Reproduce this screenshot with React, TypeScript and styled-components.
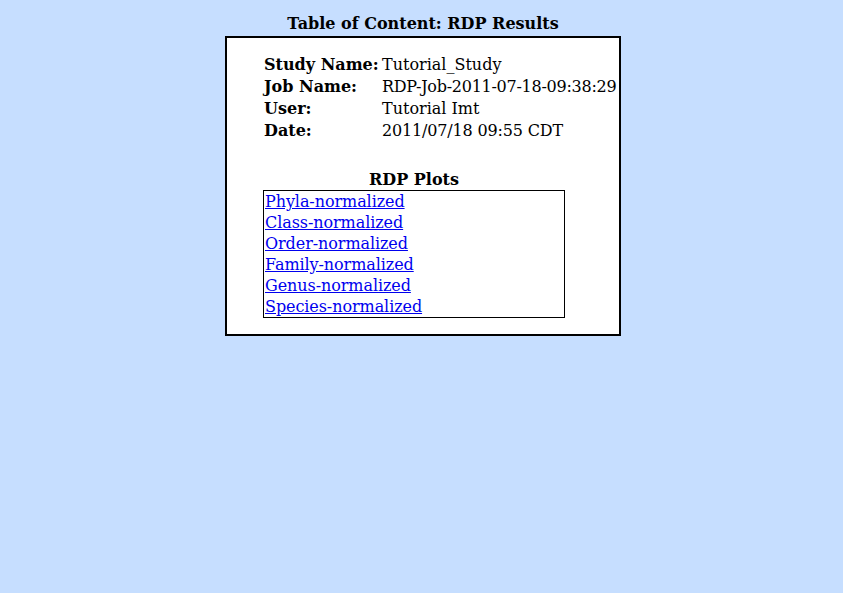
import styled, { createGlobalStyle } from "styled-components";

const GlobalStyle = createGlobalStyle`
  html, body {
    margin: 0;
    background-color: #c6deff;
  }
  body {
    font-family: "DejaVu Serif", "Liberation Serif", serif;
    font-size: 16px;
    color: #000;
  }
`

const Page = styled.div`
  display: flex;
  flex-direction: column;
  align-items: center;
  padding: 14px 0 0 3px;
`
const Title = styled.h1`
  margin: 0 0 3px;
  font-size: 16px;
  font-weight: bold;
  line-height: 19px;
`
const Box = styled.section`
  width: 353px;
  border: 2px solid #000;
  background-color: #fff;
  padding: 15px 2px 16px 37px;
`
const InfoGrid = styled.div`
  display: grid;
  grid-template-columns: 117px auto;
  grid-auto-rows: 22px;
  align-items: center;
  white-space: nowrap;
`
const Label = styled.span`
  font-weight: bold;
`
const Value = styled.span<{ $spacing: number }>`
  padding-left: 1px;
  letter-spacing: ${p => p.$spacing}px;
`
const Plots = styled.div`
  width: 302px;
  margin: 28px 0 0 -1px;
`
const PlotsTitle = styled.h2`
  margin: 0;
  font-size: 16px;
  font-weight: bold;
  line-height: 21px;
  text-align: center;
`
const LinkList = styled.ul`
  list-style: none;
  margin: 0;
  padding: 0 1px;
  border: 1px solid #000;
`
const LinkItem = styled.li`
  height: 21px;
  line-height: 21px;
  & > a {
    color: #0000ee;
    text-decoration: underline;
    letter-spacing: -0.08px;
  }
`

const info: [string, string, number][] = [
  ["Study Name:", "Tutorial_Study", 0],
  ["Job Name:", "RDP-Job-2011-07-18-09:38:29", -0.26],
  ["User:", "Tutorial Imt", 0],
  ["Date:", "2011/07/18 09:55 CDT", -0.16],
];

const plots = [
  "Phyla-normalized",
  "Class-normalized",
  "Order-normalized",
  "Family-normalized",
  "Genus-normalized",
  "Species-normalized",
];

function App() {
  return (
    <>
      <GlobalStyle />
      <Page>
        <Title>Table of Content: RDP Results</Title>
        <Box>
          <InfoGrid>
            {info.map(([label, value, spacing]) => [
              <Label key={label}>{label}</Label>,
              <Value key={label + "v"} $spacing={spacing}>{value}</Value>,
            ])}
          </InfoGrid>
          <Plots>
            <PlotsTitle>RDP Plots</PlotsTitle>
            <LinkList>
              {plots.map(p => (
                <LinkItem key={p}>
                  <a href="#">{p}</a>
                </LinkItem>
              ))}
            </LinkList>
          </Plots>
        </Box>
      </Page>
    </>
  );
}
export default App;
